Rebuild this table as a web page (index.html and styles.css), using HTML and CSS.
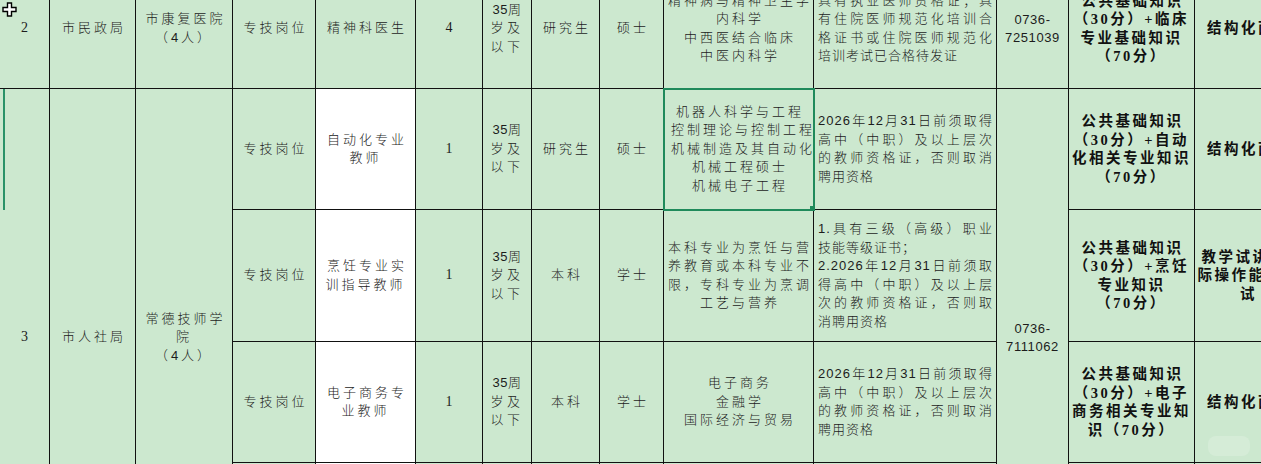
FILE: index.html
```html
<!DOCTYPE html>
<html lang="zh-CN">
<head>
<meta charset="utf-8">
<title>岗位表</title>
<link rel="stylesheet" href="styles.css">
</head>
<body>
<div class="sheet">
  <table class="grid">
    <colgroup>
      <col class="c1"><col class="c2"><col class="c3"><col class="c4"><col class="c5"><col class="c6"><col class="c7">
      <col class="c8"><col class="c9"><col class="c10"><col class="c11"><col class="c12"><col class="c13"><col class="c14">
    </colgroup>
    <tbody>
      <tr class="r2">
        <td class="num">2</td>
        <td class="sp">市民政局</td>
        <td class="sp">市康复医院<br>（4人）</td>
        <td class="sp">专技岗位</td>
        <td class="sp">精神科医生</td>
        <td class="num">4</td>
        <td class="sp age"><span class="d">35</span>周<br>岁及<br>以下</td>
        <td class="sp">研究生</td>
        <td class="sp">硕士</td>
        <td class="major">
          <div class="j">精神病与精神卫生学</div>
          <div>内科学</div>
          <div>中西医结合临床</div>
          <div>中医内科学</div>
        </td>
        <td class="req">
          <div class="j">具有执业医师资格证；具</div>
          <div class="j">有住院医师规范化培训合</div>
          <div class="j">格证书或住院医师规范化</div>
          <div>培训考试已合格待发证</div>
        </td>
        <td class="tel">0736-<br>7251039</td>
        <td class="exam">公共基础知识<br>（30分）+临床<br>专业基础知识<br>（70分）</td>
        <td class="exam">结构化面试</td>
      </tr>
      <tr class="r3a">
        <td class="num" rowspan="4">3</td>
        <td class="sp" rowspan="4">市人社局</td>
        <td class="sp" rowspan="4">常德技师学<br>院<br>（4人）</td>
        <td class="sp">专技岗位</td>
        <td class="sp white">自动化专业<br>教师</td>
        <td class="num">1</td>
        <td class="sp age"><span class="d">35</span>周<br>岁及<br>以下</td>
        <td class="sp">研究生</td>
        <td class="sp">硕士</td>
        <td class="major sel">
          <div>机器人科学与工程</div>
          <div>控制理论与控制工程</div>
          <div>机械制造及其自动化</div>
          <div>机械工程硕士</div>
          <div>机械电子工程</div>
        </td>
        <td class="req">
          <div class="j">2026年12月31日前须取得</div>
          <div class="j">高中（中职）及以上层次</div>
          <div class="j">的教师资格证，否则取消</div>
          <div>聘用资格</div>
        </td>
        <td class="tel" rowspan="4">0736-<br>7111062</td>
        <td class="exam">公共基础知识<br>（30分）+自动<br>化相关专业知识<br>（70分）</td>
        <td class="exam">结构化面试</td>
      </tr>
      <tr class="r3b">
        <td class="sp">专技岗位</td>
        <td class="sp white">烹饪专业实<br>训指导教师</td>
        <td class="num">1</td>
        <td class="sp age"><span class="d">35</span>周<br>岁及<br>以下</td>
        <td class="sp">本科</td>
        <td class="sp">学士</td>
        <td class="major">
          <div class="j">本科专业为烹饪与营</div>
          <div class="j">养教育或本科专业不</div>
          <div class="j">限，专科专业为烹调</div>
          <div>工艺与营养</div>
        </td>
        <td class="req">
          <div class="j">1.具有三级（高级）职业</div>
          <div>技能等级证书；</div>
          <div class="j">2.2026年12月31日前须取</div>
          <div class="j">得高中（中职）及以上层</div>
          <div class="j">次的教师资格证，否则取</div>
          <div>消聘用资格</div>
        </td>
        <td class="exam">公共基础知识<br>（30分）+烹饪<br>专业知识<br>（70分）</td>
        <td class="exam">教学试讲+实<br>际操作能力测<br>试</td>
      </tr>
      <tr class="r3c">
        <td class="sp">专技岗位</td>
        <td class="sp white">电子商务专<br>业教师</td>
        <td class="num">1</td>
        <td class="sp age"><span class="d">35</span>周<br>岁及<br>以下</td>
        <td class="sp">本科</td>
        <td class="sp">学士</td>
        <td class="major">
          <div>电子商务</div>
          <div>金融学</div>
          <div>国际经济与贸易</div>
        </td>
        <td class="req">
          <div class="j">2026年12月31日前须取得</div>
          <div class="j">高中（中职）及以上层次</div>
          <div class="j">的教师资格证，否则取消</div>
          <div>聘用资格</div>
        </td>
        <td class="exam">公共基础知识<br>（30分）+电子<br>商务相关专业知<br>识（70分）</td>
        <td class="exam">结构化面试</td>
      </tr>
      <tr class="r3d">
        <td class="sp">专技岗位</td>
        <td class="sp white">专业教师</td>
        <td class="num">1</td>
        <td class="sp age"><span class="d">35</span>周<br>岁及<br>以下</td>
        <td class="sp">本科</td>
        <td class="sp">学士</td>
        <td class="major"><div>专业不限</div></td>
        <td class="req"><div>聘用资格</div></td>
        <td class="exam">公共基础知识</td>
        <td class="exam">结构化面试</td>
      </tr>
    </tbody>
  </table>
  <div class="row-mark"></div>
  <div class="glow"></div>
  <svg class="cursor" width="16" height="16" viewBox="0 0 16 16">
    <path d="M5.5 1 H9.5 V5.5 H14 V9.5 H9.5 V14 H5.5 V9.5 H1 V5.5 H5.5 Z" fill="#fff" stroke="#000" stroke-width="1.4" stroke-linejoin="miter"/>
  </svg>
</div>
</body>
</html>
```
FILE: styles.css
```css
html, body {
  margin: 0;
  padding: 0;
  background: #cce8cf;
  overflow: hidden;
}

.sheet {
  position: relative;
  width: 1261px;
  height: 464px;
  overflow: hidden;
}

.grid {
  border-collapse: collapse;
  table-layout: fixed;
  width: 1302px;
  margin-top: -32px;
  margin-left: -1px;
  font-family: "Liberation Sans", "Noto Sans CJK SC", sans-serif;
  font-size: 13px;
  font-weight: 300;
  line-height: 18.5px;
  color: #1c1c1c;
}

.c1 { width: 50px; }
.c2 { width: 86px; }
.c3 { width: 97px; }
.c4 { width: 83px; }
.c5 { width: 100px; }
.c6 { width: 67px; }
.c7 { width: 49px; }
.c8 { width: 68px; }
.c9 { width: 64px; }
.c10 { width: 150px; }
.c11 { width: 183px; }
.c12 { width: 72px; }
.c13 { width: 126px; }
.c14 { width: 108px; }

.r2 { height: 120px; }
.r3a { height: 121px; }
.r3b { height: 132px; }
.r3c { height: 121px; }
.r3d { height: 124px; }

.grid td {
  border: 1px solid #111;
  padding: 0;
  text-align: center;
  vertical-align: middle;
  background: #cce8cf;
  overflow: hidden;
  white-space: nowrap;
}

.grid td.white {
  background: #fff;
}

.sp {
  letter-spacing: 3px;
  text-indent: 3px;
}

.num {
  font-family: "Liberation Serif", "Noto Sans CJK SC", serif;
  font-size: 14px;
  font-weight: 400;
}

.age {
  letter-spacing: 3.5px;
  text-indent: 3px;
}

.age .d {
  letter-spacing: 0.5px;
}

.major {
  letter-spacing: 3px;
  padding: 0 4px !important;
}

.major div {
  text-indent: 3px;
}

.major div.j {
  text-indent: 0;
  margin-right: -3px;
}

.req {
  text-align: left !important;
  letter-spacing: 1px;
  padding: 0 4px 0 4px !important;
}

.j {
  text-align: justify;
  text-align-last: justify;
}

.req .j {
  margin-right: -1px;
}

.tel {
  font-family: "Liberation Sans", sans-serif;
  font-size: 13px;
  font-weight: 400;
  letter-spacing: 0.6px;
  line-height: 18px;
}

.exam {
  font-family: "Liberation Serif", "Noto Sans CJK SC", serif;
  font-size: 14.5px;
  font-weight: 700;
  letter-spacing: 2.5px;
  text-indent: 2px;
  color: #111;
}

.sel {
  position: relative;
  outline: 2.5px solid #1f8a5b;
  outline-offset: -1.5px;
}

.sel::after {
  content: "";
  position: absolute;
  right: -3px;
  bottom: -3px;
  width: 5px;
  height: 5px;
  background: #1f8a5b;
  border: 1px solid #cce8cf;
}

.row-mark {
  position: absolute;
  left: 3px;
  top: 89px;
  width: 2px;
  height: 121px;
  background: #2a9268;
}

.glow {
  position: absolute;
  left: 1208px;
  top: 436px;
  width: 42px;
  height: 20px;
  border-radius: 8px;
  background: rgba(255, 255, 255, 0.18);
}

.cursor {
  position: absolute;
  left: 2px;
  top: 2px;
}
```
